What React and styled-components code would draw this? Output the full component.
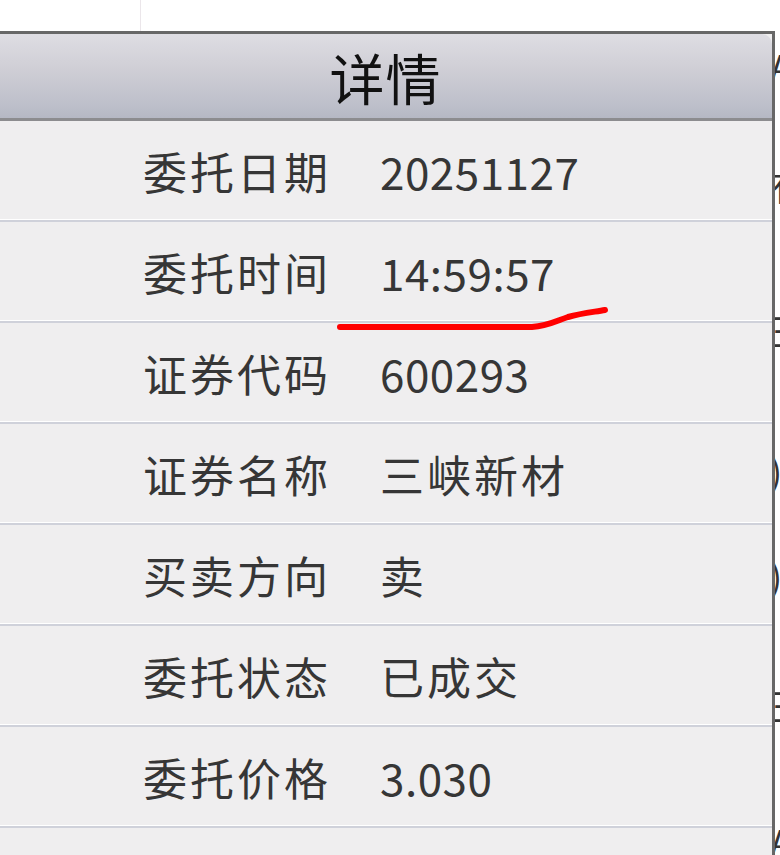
import React from "react";
import styled, { createGlobalStyle } from "styled-components";

const GlobalStyle = createGlobalStyle`
  html, body {
    margin: 0;
    padding: 0;
    background: #ffffff;
    overflow: hidden;
  }
  body {
    font-family: "Noto Sans CJK SC", "Noto Sans", sans-serif;
  }
`;

const Page = styled.div`
  position: relative;
  width: 780px;
  height: 855px;
  overflow: hidden;
  background: #ffffff;
`;

const PageRule = styled.div`
  position: absolute;
  left: 140px;
  top: 0;
  width: 1px;
  height: 31px;
  background: #ebe6ea;
`;

const PeekColumn = styled.div`
  position: absolute;
  left: 770px;
  top: 0;
  width: 60px;
  display: flex;
  flex-direction: column;
  font-size: 36px;
  color: #333;
  line-height: 1;
`;

const Peek = styled.span`
  height: ${({ $h }) => $h}px;
  display: flex;
  align-items: center;
`;

const Dialog = styled.div`
  position: relative;
  z-index: 1;
  margin-top: 31px;
  margin-left: -4px;
  width: 779px;
  box-sizing: border-box;
  border: 3px solid #676767;
  border-bottom: none;
  background: #efeeef;
`;

const Header = styled.div`
  height: 84px;
  display: flex;
  align-items: center;
  justify-content: center;
  border-top-right-radius: 10px;
  background: linear-gradient(to bottom, #dedde3 0%, #d0cfd6 40%, #bdbfca 85%, #b5b8c4 100%);
  border-bottom: 3px solid #8c8c8f;
  font-size: 55px;
  color: #111;
  letter-spacing: 1px;
`;

const Row = styled.div`
  height: 99px;
  display: grid;
  grid-template-columns: 237px 1fr;
  align-items: center;
  padding-left: 144px;
  border-bottom: 2px solid #cfd1da;
  box-shadow: inset 0 -1px 0 #ffffff;
  font-size: 44px;
  color: #363636;
`;

const Label = styled.span`
  letter-spacing: 3px;
`;

const Value = styled.span`
  font-family: "Noto Sans CJK SC", "Noto Sans", sans-serif;
  letter-spacing: ${({ $cjk }) => ($cjk ? "3px" : "0.5px")};
`;

const PenMark = styled.svg`
  position: absolute;
  left: 0;
  top: 0;
  z-index: 2;
  pointer-events: none;
`;

const rows = [
  ["委托日期", "20251127"],
  ["委托时间", "14:59:57"],
  ["证券代码", "600293"],
  ["证券名称", "三峡新材", true],
  ["买卖方向", "卖", true],
  ["委托状态", "已成交", true],
  ["委托价格", "3.030"],
  ["委托数量", "1000"],
];

export default function App() {
  return (
    <>
      <GlobalStyle />
      <Page>
        <PageRule />
        <PeekColumn>
          <Peek $h={130}>A</Peek>
          <Peek $h={110}>有</Peek>
          <Peek $h={180}>王</Peek>
          <Peek $h={100}>)</Peek>
          <Peek $h={110}>)</Peek>
          <Peek $h={150}>王</Peek>
          <Peek $h={120}>A</Peek>
        </PeekColumn>
        <Dialog>
          <Header>详情</Header>
          {rows.map(([k, v, cjk]) => (
            <Row key={k}>
              <Label>{k}</Label>
              <Value $cjk={cjk}>{v}</Value>
            </Row>
          ))}
        </Dialog>
        <PenMark width="780" height="855" viewBox="0 0 780 855">
          <path
            d="M340 327 L532 327 C548 326 556 321 568 317 C582 313 594 312 605 310"
            fill="none"
            stroke="#ff0000"
            strokeWidth="6"
            strokeLinecap="round"
            strokeLinejoin="round"
          />
        </PenMark>
      </Page>
    </>
  );
}
